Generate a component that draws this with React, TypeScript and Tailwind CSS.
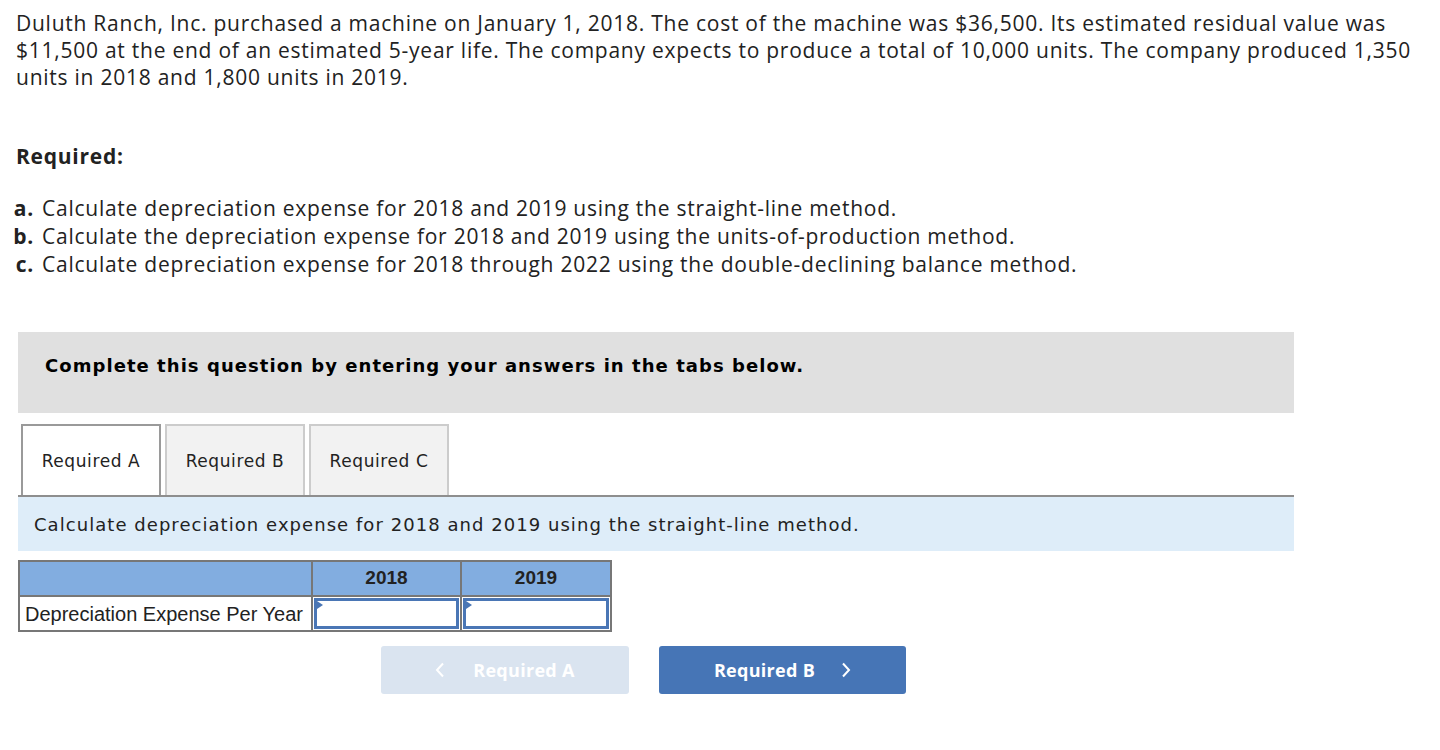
import React from 'react';

const body = { fontFamily: '"Open Sans", "Liberation Sans", sans-serif', letterSpacing: '0.75px' };
const verdana = { fontFamily: '"DejaVu Sans", Verdana, sans-serif' };
const arial = { fontFamily: '"Liberation Sans", Arial, sans-serif' };
const btn = { fontFamily: '"Open Sans", "Liberation Sans", sans-serif', letterSpacing: '0.3px' };

function Tab({ label, active }: { label: string; active?: boolean }) {
  return (
    <div
      className={`w-[140px] h-[71px] pt-[3px] flex items-center justify-center text-[17px] tracking-[0.6px] text-[#222] border-2 border-b-0 ${
        active ? 'bg-white border-[#9a9a9a]' : 'bg-[#f2f2f2] border-[#cccccc]'
      }`}
      style={verdana}
    >
      {label}
    </div>
  );
}

function InputCell() {
  return (
    <td className="p-0 border-2 border-[#777]">
      <div className="relative h-[31px] m-[1px] border-[3px] border-[#4a76b5] bg-white">
        <div className="absolute left-0 top-0 w-0 h-0 border-l-[6px] border-l-[#4a76b5] border-y-[4px] border-y-transparent" />
      </div>
    </td>
  );
}

const items = [
  ['a.', 'Calculate depreciation expense for 2018 and 2019 using the straight-line method.'],
  ['b.', 'Calculate the depreciation expense for 2018 and 2019 using the units-of-production method.'],
  ['c.', 'Calculate depreciation expense for 2018 through 2022 using the double-declining balance method.'],
];

export default function App() {
  return (
    <div className="bg-white min-h-[750px] w-[1440px] text-[#222]">
      <div className="pl-[16px] pt-[10px] text-[21px] leading-[27px] whitespace-nowrap" style={body}>
        Duluth Ranch, Inc. purchased a machine on January 1, 2018. The cost of the machine was $36,500. Its estimated residual value was
        <br />
        $11,500 at the end of an estimated 5-year life. The company expects to produce a total of 10,000 units. The company produced 1,350
        <br />
        units in 2018 and 1,800 units in 2019.
      </div>

      <div className="pl-[16px] mt-[51px] text-[21px] font-bold leading-[28px]" style={body}>
        Required:
      </div>

      <div className="pl-[10px] mt-[24px] text-[21px] leading-[28px] grid grid-cols-[24px_1fr] gap-x-[8px]" style={body}>
        {items.map(([k, t]) => (
          <React.Fragment key={k}>
            <span className="font-bold text-right">{k}</span>
            <span>{t}</span>
          </React.Fragment>
        ))}
      </div>

      <div className="ml-[18px] w-[1276px] mt-[54px]">
        <div className="h-[81px] bg-[#e0e0e0] flex items-start pt-[23px] pl-[27px] text-[18px] leading-[22px] tracking-[1.05px] font-bold text-black" style={verdana}>
          Complete this question by entering your answers in the tabs below.
        </div>

        <div className="mt-[11px] flex gap-[4px] pl-[3px] items-end">
          <Tab label="Required A" active />
          <Tab label="Required B" />
          <Tab label="Required C" />
        </div>
        <div className="h-[2px] bg-[#8e8e8e]" />

        <div className="h-[54px] bg-[#deedf9] flex items-center pl-[16px] text-[18px] tracking-[1.05px]" style={verdana}>
          Calculate depreciation expense for 2018 and 2019 using the straight-line method.
        </div>

        <table className="mt-[9px] border-collapse border-2 border-[#777]" style={arial}>
          <thead>
            <tr className="bg-[#82ade0] h-[35px]">
              <th className="w-[293px] border-2 border-[#777]" />
              <th className="w-[149px] border-2 border-[#777] text-[19px] font-bold text-[#222]">2018</th>
              <th className="w-[150px] border-2 border-[#777] text-[19px] font-bold text-[#222]">2019</th>
            </tr>
          </thead>
          <tbody>
            <tr className="h-[34px]">
              <td className="border-2 border-[#777] pl-[5px] pr-[6px] text-[20px] text-[#222] whitespace-nowrap">Depreciation Expense Per Year</td>
              <InputCell />
              <InputCell />
            </tr>
          </tbody>
        </table>

        <div className="mt-[14px] flex gap-[30px] pl-[363px]" style={btn}>
          <button className="w-[248px] h-[48px] rounded-[3px] bg-[#dae4f0] text-white font-bold text-[18px] flex items-center justify-center gap-[28px]">
            <svg width="10" height="16" viewBox="0 0 10 16" fill="none" stroke="white" strokeWidth="2">
              <path d="M8 1.5 L2 8 L8 14.5" />
            </svg>
            <span>Required A</span>
          </button>
          <button className="w-[247px] h-[48px] rounded-[3px] bg-[#4675b6] text-white font-bold text-[18px] flex items-center justify-center gap-[26px]">
            <span>Required B</span>
            <svg width="10" height="16" viewBox="0 0 10 16" fill="none" stroke="white" strokeWidth="2">
              <path d="M2 1.5 L8 8 L2 14.5" />
            </svg>
          </button>
        </div>
      </div>
    </div>
  );
}
